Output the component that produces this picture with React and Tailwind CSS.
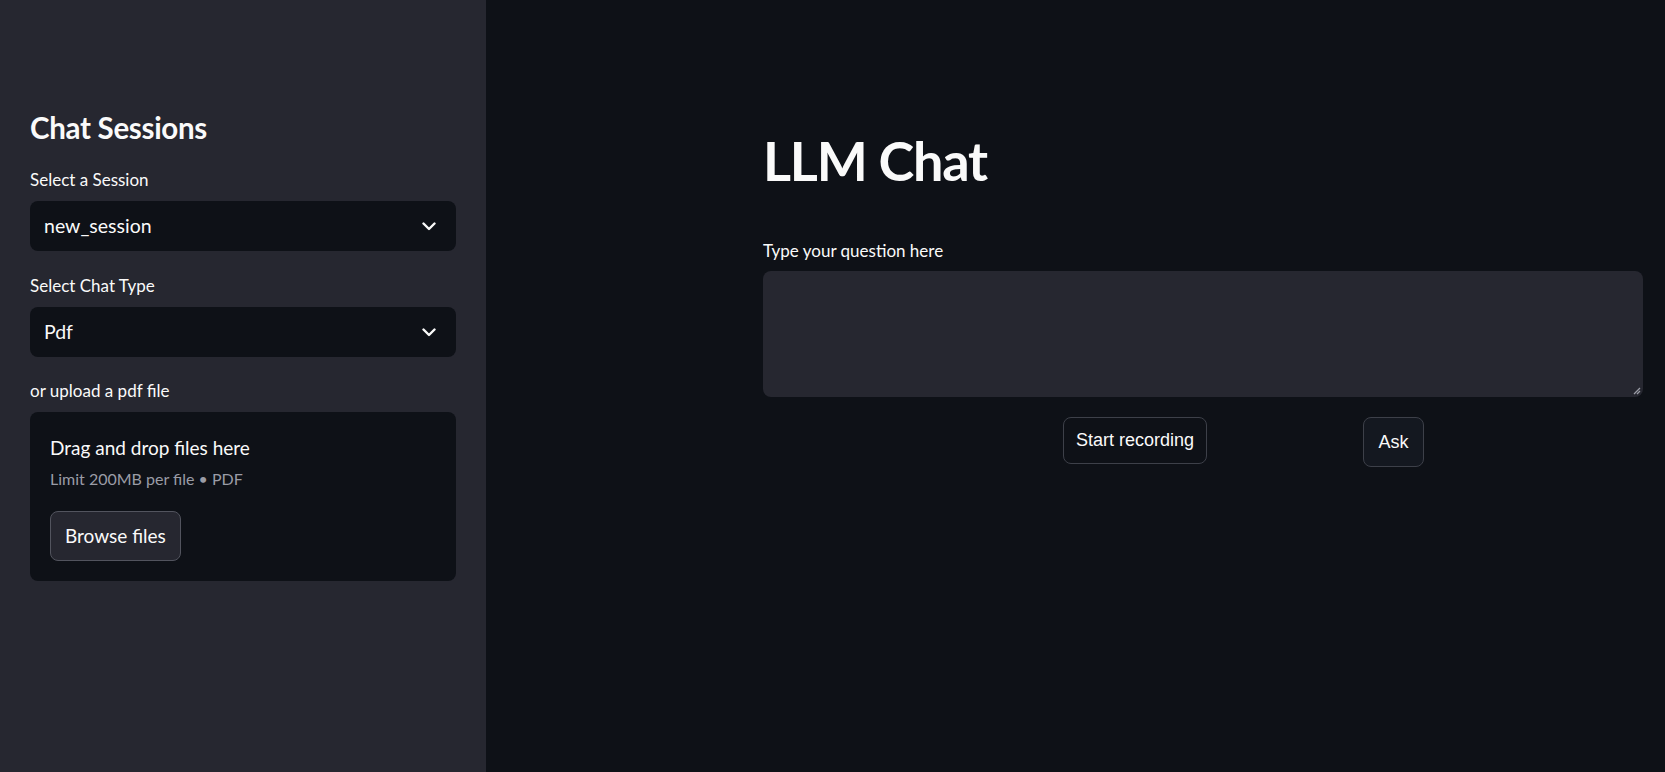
import React from "react";

const Chevron = () => (
  <svg width="14" height="9" viewBox="0 0 14 9" fill="none">
    <path d="M1.5 1.5 7 7l5.5-5.5" stroke="#fafafa" strokeWidth="2.4" strokeLinecap="round" strokeLinejoin="round" />
  </svg>
);

const SelectBox = ({ label, value, top }) => (
  <div className={top}>
    <p className="text-[17px] leading-[24px] text-[#fafafa]">{label}</p>
    <div className="mt-[9px] h-[50px] rounded-[8px] bg-[#0e1117] flex items-center justify-between pl-[14px] pr-[20px]">
      <span className="text-[19.5px] text-[#fafafa]">{value}</span>
      <Chevron />
    </div>
  </div>
);

const App = () => {
  return (
    <div
      className="flex w-full h-[772px] overflow-hidden bg-[#0e1117] text-[#fafafa]"
      style={{ fontFamily: "Lato, 'Noto Sans', sans-serif" }}
    >
      <aside className="w-[486px] shrink-0 bg-[#262730] px-[30px] pt-[110px]">
        <h2 className="text-[29.5px] leading-[36px] font-bold tracking-[-0.3px]">Chat Sessions</h2>
        <SelectBox label="Select a Session" value="new_session" top="mt-[22px]" />
        <SelectBox label="Select Chat Type" value="Pdf" top="mt-[23px]" />
        <p className="mt-[22px] text-[17px] leading-[24px]">or upload a pdf file</p>
        <div className="mt-[9px] rounded-[8px] bg-[#0e1117] px-[20px] pt-[24px] pb-[20px]">
          <p className="text-[19px] leading-[24px]">Drag and drop files here</p>
          <p className="mt-[8px] text-[16px] leading-[22px] text-[#9a9ca6]">Limit 200MB per file • PDF</p>
          <button className="mt-[21px] h-[50px] px-[14px] rounded-[8px] border border-[#52545e] bg-[#262730] text-[19px] text-[#fafafa]">
            Browse files
          </button>
        </div>
      </aside>

      <main className="flex-1 pl-[277px] pr-[22px] pt-[129px]">
        <div className="w-[880px]">
          <h1 className="text-[54px] leading-[64px] font-bold tracking-[-1.2px]">LLM Chat</h1>
          <p className="mt-[46px] text-[17px] leading-[24px]">Type your question here</p>
          <div className="relative mt-[8px] h-[126px] rounded-[8px] bg-[#262730]">
            <svg className="absolute right-[2px] bottom-[2px]" width="8" height="8" viewBox="0 0 8 8">
              <path d="M7 1 1 7M7 4 4 7" stroke="#9a9ca6" strokeWidth="1.3" />
            </svg>
          </div>
          <div
            className="mt-[20px] grid grid-cols-3 gap-x-[20px] items-start"
            style={{ fontFamily: "'Liberation Sans', Arial, sans-serif" }}
          >
            <div />
            <div>
              <button className="h-[47px] px-[12px] rounded-[8px] border border-[#3d4049] bg-[#0e1117] text-[18px] text-[#fafafa]">
                Start recording
              </button>
            </div>
            <div>
              <button className="h-[50px] w-[61px] rounded-[8px] border border-[#3d4049] bg-[#141820] text-[18px] text-[#fafafa]">
                Ask
              </button>
            </div>
          </div>
        </div>
      </main>
    </div>
  );
};

export default App;
